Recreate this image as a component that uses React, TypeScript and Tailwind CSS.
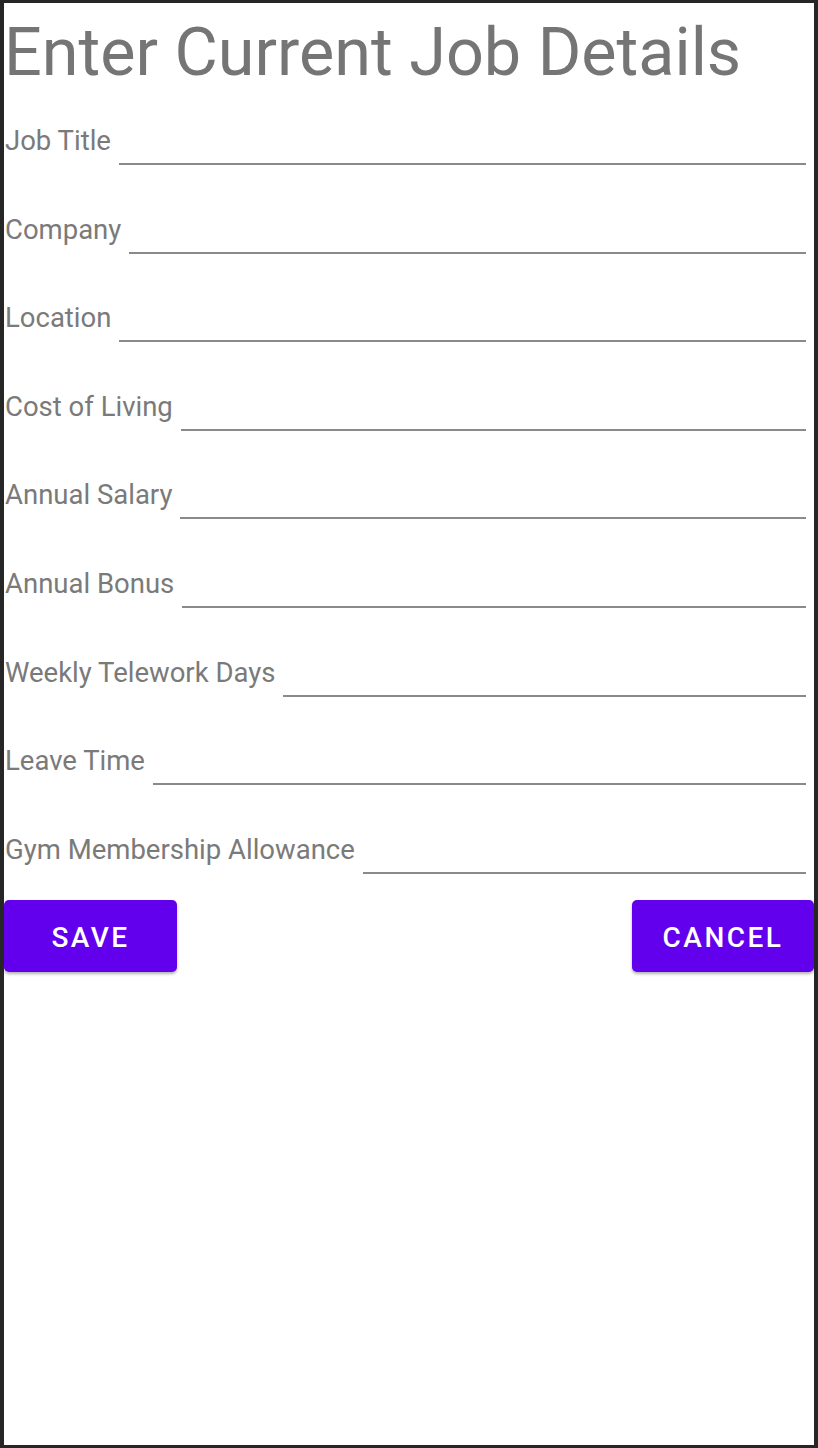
import React from "react";

const fields = [
  "Job Title",
  "Company",
  "Location",
  "Cost of Living",
  "Annual Salary",
  "Annual Bonus",
  "Weekly Telework Days",
  "Leave Time",
  "Gym Membership Allowance",
];

export default function App() {
  return (
    <div
      className="w-[818px] h-[1448px] bg-white border-[#262626] border-l-4 border-r-4 border-t-[3px] border-b-[3px] overflow-hidden"
      style={{ fontFamily: "Roboto, 'Noto Sans', sans-serif" }}
    >
      <div className="h-[73.4px] pt-[9px] text-[66.5px] leading-[80px] text-[#757575] whitespace-nowrap">
        Enter Current Job Details
      </div>
      {fields.map((f) => (
        <div key={f} className="flex items-end h-[88.6px]">
          <span className="text-[27.5px] leading-[33px] pb-[8px] pl-[1px] text-[#7a7a7a] whitespace-nowrap">
            {f}
          </span>
          <div className="flex-1 ml-2 mr-2 border-b-2 border-[#8a8a8a] h-[30px]" />
        </div>
      ))}
      <div className="flex justify-between mt-[26px]">
        <button className="w-[173px] h-[72px] pt-[4px] rounded-[5px] bg-[#6200EE] text-white text-[28px] font-medium tracking-[0.089em] shadow-[0_2px_3px_rgba(0,0,0,0.3)]">
          SAVE
        </button>
        <button className="w-[182px] h-[72px] pt-[4px] rounded-[5px] bg-[#6200EE] text-white text-[28px] font-medium tracking-[0.089em] shadow-[0_2px_3px_rgba(0,0,0,0.3)]">
          CANCEL
        </button>
      </div>
    </div>
  );
}
